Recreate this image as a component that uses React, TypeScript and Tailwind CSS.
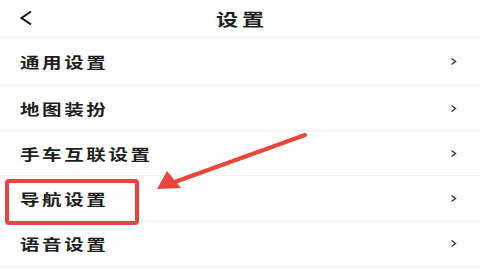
import React from 'react';

const rows = [
  { label: '通用设置', h: 'h-[48px]' },
  { label: '地图装扮', h: 'h-[45px]' },
  { label: '手车互联设置', h: 'h-[45px]' },
  { label: '导航设置', h: 'h-[45px]' },
  { label: '语音设置', h: 'h-[46px]' },
];

const Chevron = () => (
  <svg width="7" height="9" viewBox="0 0 7 9" className="shrink-0">
    <path d="M1.5 1.5 L5.5 4.5 L1.5 7.5" fill="none" stroke="#3a3a3a" strokeWidth="1.5" />
  </svg>
);

export default function App() {
  return (
    <div
      className="relative w-[480px] h-[270px] overflow-hidden bg-white text-[#1e1e1e]"
      style={{ fontFamily: '"Noto Sans CJK SC", "Noto Sans", sans-serif' }}
    >
      {/* header */}
      <div className="relative flex h-[38px] items-center justify-center border-b border-[#f1f2f2]">
        <svg width="14" height="16" viewBox="0 0 14 16" className="absolute left-[19px] top-[10px]">
          <path d="M12 1.5 L2.5 8 L12 14.5" fill="none" stroke="#111" strokeWidth="2" />
        </svg>
        <span className="ml-[4px] origin-center scale-x-[1.3] text-[17px] font-semibold tracking-[3px]">设置</span>
      </div>

      {/* rows */}
      {rows.map((r) => (
        <div key={r.label} className={`flex ${r.h} items-center justify-between border-b border-[#f1f2f2] pl-[20px] pr-[23px]`}>
          <span className="origin-left scale-x-[1.3] text-[15px] font-semibold tracking-[2px] pt-[2px]">{r.label}</span>
          <Chevron />
        </div>
      ))}

      {/* annotation box */}
      <div className="absolute left-[5px] top-[179px] h-[46px] w-[134px] rounded-[4px] border-[4px] border-[#e8463d]" />

      {/* annotation arrow */}
      <svg width="480" height="270" className="pointer-events-none absolute left-0 top-0">
        <line x1="305" y1="135" x2="172" y2="183" stroke="#e8463d" strokeWidth="4" strokeLinecap="round" />
        <polygon points="157,189 167,171 181,188" fill="#e8463d" />
      </svg>
    </div>
  );
}
